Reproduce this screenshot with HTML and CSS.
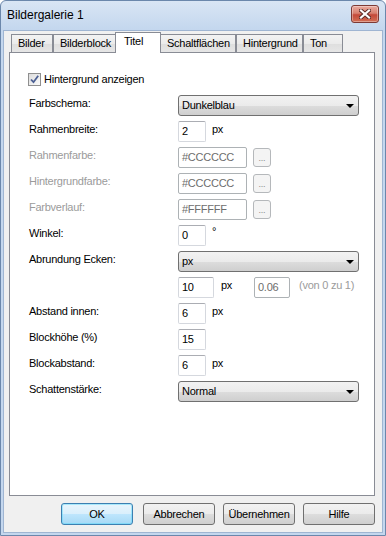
FILE: index.html
```html
<!DOCTYPE html>
<html lang="de">
<head>
  <meta charset="UTF-8">
  <title>Bildergalerie 1</title>
  <link rel="stylesheet" href="styles.css">
</head>
<body>
  <div class="window">
    <div class="titlebar">
      <span class="title">Bildergalerie 1</span>
      <div class="close">
        <svg width="12" height="10" viewBox="0 0 12 10">
          <path d="M2 1.5 L10 8.5 M10 1.5 L2 8.5" stroke="#5a2a26" stroke-width="4" stroke-linecap="square"/>
          <path d="M2 1.5 L10 8.5 M10 1.5 L2 8.5" stroke="#ffffff" stroke-width="2.2" stroke-linecap="square"/>
        </svg>
      </div>
    </div>

    <div class="client">
      <div class="tabs">
        <div class="tab tab-bilder">Bilder</div>
        <div class="tab tab-block">Bilderblock</div>
        <div class="tab tab-titel active">Titel</div>
        <div class="tab tab-schalt">Schaltflächen</div>
        <div class="tab tab-hinter">Hintergrund</div>
        <div class="tab tab-ton">Ton</div>
      </div>

      <div class="panel">
        <div class="check-row">
          <span class="checkbox">
            <svg width="11" height="11" viewBox="0 0 11 11">
              <path d="M2 5.5 L4.5 8.2 L9.2 1.8" fill="none" stroke="#4b5f93" stroke-width="1.8"/>
            </svg>
          </span>
          <span>Hintergrund anzeigen</span>
        </div>

        <div class="row">
          <span class="label">Farbschema:</span>
          <div class="select">Dunkelblau<span class="arrow"></span></div>
        </div>

        <div class="row">
          <span class="label">Rahmenbreite:</span>
          <div class="field small">2</div>
          <span class="unit">px</span>
        </div>

        <div class="row">
          <span class="label disabled">Rahmenfarbe:</span>
          <div class="field color off">#CCCCCC</div>
          <div class="dots">...</div>
        </div>

        <div class="row">
          <span class="label disabled">Hintergrundfarbe:</span>
          <div class="field color off">#CCCCCC</div>
          <div class="dots">...</div>
        </div>

        <div class="row">
          <span class="label disabled">Farbverlauf:</span>
          <div class="field color off">#FFFFFF</div>
          <div class="dots">...</div>
        </div>

        <div class="row">
          <span class="label">Winkel:</span>
          <div class="field small">0</div>
          <span class="unit deg">°</span>
        </div>

        <div class="row">
          <span class="label">Abrundung Ecken:</span>
          <div class="select">px<span class="arrow"></span></div>
        </div>

        <div class="row">
          <span class="label"></span>
          <div class="field medium">10</div>
          <span class="unit wide">px</span>
          <div class="field medium off">0.06</div>
          <span class="unit note">(von 0 zu 1)</span>
        </div>

        <div class="row">
          <span class="label">Abstand innen:</span>
          <div class="field small">6</div>
          <span class="unit">px</span>
        </div>

        <div class="row">
          <span class="label">Blockhöhe (%)</span>
          <div class="field small">15</div>
        </div>

        <div class="row">
          <span class="label">Blockabstand:</span>
          <div class="field small">6</div>
          <span class="unit">px</span>
        </div>

        <div class="row">
          <span class="label">Schattenstärke:</span>
          <div class="select">Normal<span class="arrow"></span></div>
        </div>
      </div>

      <div class="buttons">
        <div class="btn default">OK</div>
        <div class="btn">Abbrechen</div>
        <div class="btn">Übernehmen</div>
        <div class="btn">Hilfe</div>
      </div>
    </div>
  </div>
</body>
</html>
```

FILE: styles.css
```css
body {
  margin: 0;
  font-family: "Liberation Sans", Arial, sans-serif;
  font-size: 11px;
  letter-spacing: -0.25px;
  color: #000;
  background: #fff;
}

.window {
  width: 386px;
  height: 536px;
  box-sizing: border-box;
  border: 1px solid #6b87ab;
  border-radius: 6px 6px 0 0;
  padding: 0 2px 2px 2px;
  background: linear-gradient(#d9e5f4, #c4d7ee 28px, #c4d7ee);
  display: flex;
  flex-direction: column;
}

/* Titelleiste */
.titlebar {
  height: 29px;
  display: flex;
  justify-content: space-between;
  align-items: flex-start;
  flex-shrink: 0;
}

.title {
  font-size: 12px;
  letter-spacing: 0;
  line-height: 14px;
  margin: 7px 0 0 4px;
}

.close {
  width: 26px;
  height: 16px;
  margin: 4px 4px 0 0;
  border: 1px solid #7d3a35;
  border-radius: 3px;
  background: linear-gradient(#e9aa9f, #d88171 45%, #c4493a 55%, #d26f55);
  display: flex;
  justify-content: center;
  align-items: center;
  box-shadow: inset 0 0 0 1px rgba(255, 255, 255, 0.35);
}

/* Fensterinhalt */
.client {
  flex: 1;
  background: #f0f0f0;
  border: 1px solid #9fb5d2;
  padding: 1px 7px 0 5px;
  display: flex;
  flex-direction: column;
}

.tabs {
  height: 20px;
  display: flex;
  align-items: flex-end;
  padding-left: 2px;
}

.tab {
  box-sizing: border-box;
  height: 18px;
  line-height: 17px;
  padding-left: 6px;
  border: 1px solid #898c95;
  border-bottom: none;
  background: linear-gradient(#f3f3f3, #ebebeb 50%, #dedede 51%, #e6e6e6);
}

.tab-bilder { width: 42px; }
.tab-block { width: 64px; }
.tab-titel { width: 46px; }
.tab-schalt { width: 77px; padding-left: 7px; }
.tab-hinter { width: 67px; }
.tab-ton { width: 40px; }

.tab.active {
  height: 21px;
  line-height: 16px;
  padding-left: 8px;
  margin: 0 -2px -1px -2px;
  background: #fff;
  position: relative;
  z-index: 1;
}

.panel {
  flex: 1;
  background: #fff;
  border: 1px solid #898c95;
  padding: 20px 0 0 19px;
  display: flex;
  flex-direction: column;
  gap: 5px;
}

.check-row {
  height: 13px;
  display: flex;
  align-items: center;
  gap: 3px;
  margin: 0 0 4px -1px;
  line-height: 13px;
}

.checkbox {
  width: 11px;
  height: 11px;
  border: 1px solid #8f8f8f;
  background: linear-gradient(135deg, #dcdcdc, #fafafa);
  display: flex;
}

.row {
  height: 21px;
  display: flex;
  align-items: flex-start;
}

.label {
  width: 149px;
  flex-shrink: 0;
  padding-top: 2px;
  line-height: 13px;
}

.label.disabled {
  color: #9b9b9b;
}

.select {
  width: 176px;
  height: 19px;
  line-height: 19px;
  border: 1px solid #707070;
  border-radius: 3px;
  padding-left: 3px;
  background: linear-gradient(#f2f2f2, #ebebeb 50%, #dddddd 51%, #cfcfcf);
  display: flex;
  justify-content: space-between;
  align-items: center;
}

.arrow {
  width: 0;
  height: 0;
  border-left: 4px solid transparent;
  border-right: 4px solid transparent;
  border-top: 4px solid #000;
  margin-right: 4px;
}

.field {
  height: 19px;
  line-height: 19px;
  border: 1px solid #d5d8de;
  border-top-color: #abadb3;
  border-radius: 2px;
  padding-left: 3px;
  background: #fff;
}

.field.small {
  width: 23px;
}

.field.medium {
  width: 31px;
}

.field.color {
  width: 64px;
}

.field.off {
  color: #6d6d6d;
  border-color: #adb2b5;
}

.unit {
  padding-top: 2px;
  line-height: 13px;
  margin-left: 6px;
}

.unit.deg {
  padding-top: 0;
}

.unit.wide {
  width: 33px;
  margin-left: 7px;
}

.unit.note {
  margin-left: 9px;
  color: #9b9b9b;
}

.dots {
  width: 16px;
  height: 17px;
  margin: 1px 0 0 6px;
  border: 1px solid #b5b8bb;
  border-radius: 3px;
  background: #f4f4f4;
  color: #8a8a8a;
  font-size: 9px;
  line-height: 19px;
  text-align: center;
}

/* Schaltflächen unten */
.buttons {
  height: 22px;
  margin: 7px 0 7px 0;
  display: flex;
  justify-content: flex-end;
  gap: 8px;
}

.btn {
  width: 70px;
  height: 20px;
  line-height: 20px;
  text-align: center;
  border: 1px solid #707070;
  border-radius: 3px;
  background: linear-gradient(#f2f2f2, #ebebeb 50%, #dddddd 51%, #cfcfcf);
}

.btn.default {
  margin-right: 2px;
  border-color: #3c7fb1;
  background: linear-gradient(#e9f5fc, #d9effc 50%, #bee6fd 51%, #a7d9f5);
  box-shadow: inset 0 0 0 1px #48d8fb66;
}
```
